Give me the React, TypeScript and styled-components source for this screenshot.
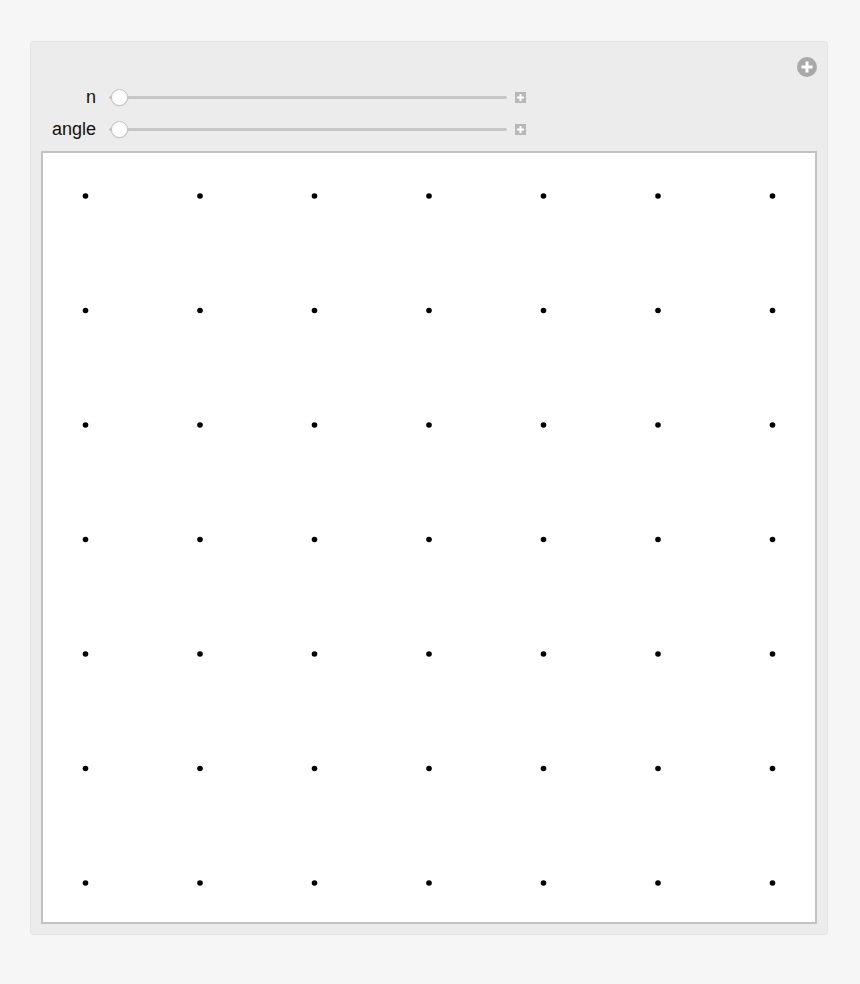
import React from "react";
import styled, { createGlobalStyle } from "styled-components";

const Global = createGlobalStyle`
  html, body { margin: 0; padding: 0; background: #f6f6f6; }
  body { font-family: "Liberation Sans", Arial, sans-serif; }
`;

const Page = styled.div`
  width: 860px;
  height: 984px;
  padding: 41px 0 0 30px;
  box-sizing: border-box;
`;

const Panel = styled.div`
  width: 798px;
  height: 894px;
  box-sizing: border-box;
  background: #ececec;
  border: 1px solid #e2e2e2;
  border-radius: 4px;
  padding: 0 10px 10px 10px;
  display: flex;
  flex-direction: column;
`;

const Header = styled.div`
  display: flex;
  flex-direction: column;
  padding-top: 15px;
  height: 110px;
  box-sizing: border-box;
`;

const TopBar = styled.div`
  display: flex;
  justify-content: flex-end;
  height: 20px;
  margin-bottom: 4px;
`;

const Row = styled.div`
  display: flex;
  align-items: center;
  height: 32px;
`;

const Label = styled.div`
  width: 55px;
  text-align: right;
  font-size: 18px;
  color: #111111;
  padding-right: 13px;
`;

const Track = styled.div`
  position: relative;
  width: 398px;
  height: 3px;
  background: #c6c6c6;
  border-radius: 2px;
`;

const Thumb = styled.div`
  position: absolute;
  left: 2px;
  top: 50%;
  width: 17px;
  height: 17px;
  margin-top: -8.5px;
  box-sizing: border-box;
  border-radius: 50%;
  background: #ffffff;
  border: 1px solid #c4c4c4;
  box-shadow: 0 0.5px 1px rgba(0, 0, 0, 0.15);
`;

const PlusBox = styled.div`
  width: 11px;
  height: 11px;
  margin-left: 8px;
  background: #b8b8b8;
  display: flex;
  align-items: center;
  justify-content: center;
`;

const Plot = styled.div`
  width: 776px;
  height: 773px;
  box-sizing: border-box;
  background: #ffffff;
  border: 2px solid #c2c2c2;
`;

const SmallPlus = () => (
  <svg width="11" height="11" viewBox="0 0 11 11">
    <rect x="4.5" y="2" width="2" height="7" fill="#fff" />
    <rect x="2" y="4.5" width="7" height="2" fill="#fff" />
  </svg>
);

const CirclePlus = () => (
  <svg width="20" height="20" viewBox="0 0 20 20">
    <circle cx="10" cy="10" r="10" fill="#a9a9a9" />
    <rect x="8.5" y="4.5" width="3" height="11" fill="#fff" />
    <rect x="4.5" y="8.5" width="11" height="3" fill="#fff" />
  </svg>
);

const Slider: React.FC<{ label: string }> = ({ label }) => (
  <Row>
    <Label>{label}</Label>
    <Track>
      <Thumb />
    </Track>
    <PlusBox>
      <SmallPlus />
    </PlusBox>
  </Row>
);

export default function App() {
  const coords = Array.from({ length: 7 }, (_, i) => 42.5 + i * 114.5);
  return (
    <>
      <Global />
      <Page>
        <Panel>
          <Header>
            <TopBar>
              <CirclePlus />
            </TopBar>
            <Slider label="n" />
            <Slider label="angle" />
          </Header>
          <Plot>
            <svg width="772" height="769" viewBox="0 0 772 769">
              {coords.map((y) =>
                coords.map((x) => (
                  <circle key={`${x}-${y}`} cx={x} cy={y + 0.5} r={2.8} fill="#000" />
                ))
              )}
            </svg>
          </Plot>
        </Panel>
      </Page>
    </>
  );
}
